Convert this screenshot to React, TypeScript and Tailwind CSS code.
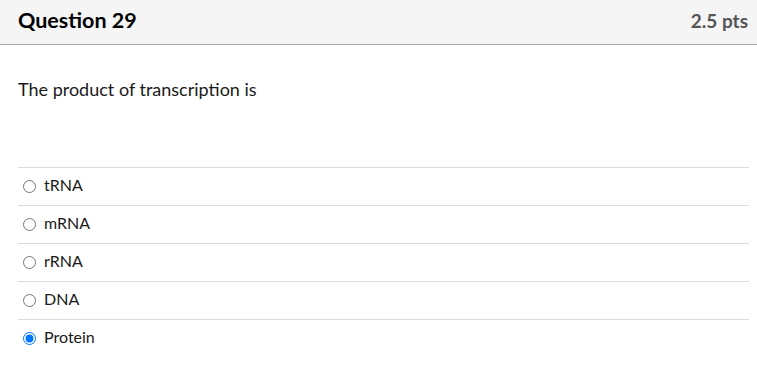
const options = ["tRNA", "mRNA", "rRNA", "DNA", "Protein"];

export default function App() {
    return (
        <div className="w-[757px] h-[369px] bg-white font-['Lato','Liberation_Sans',sans-serif] text-[#1a1a1a]">
            <div className="h-[45px] flex items-center justify-between pl-[18px] pr-[9px] bg-[#f5f5f5] border-b border-[#a8a8a8]">
                <h2 className="text-[21.5px] font-bold text-black leading-none -mt-[3px]">Question 29</h2>
                <span className="text-[19px] font-bold text-[#555] leading-none -mt-[3px]">2.5 pts</span>
            </div>
            <div className="pl-[18px] pr-[8px]">
                <p className="pt-[32px] text-[18px] leading-[24px]">The product of transcription is</p>
                <div className="mt-[66px]">
                    {options.map((opt) => (
                        <label
                            key={opt}
                            className="h-[38px] flex items-center border-t border-[#dcdcdc] text-[16px]"
                        >
                            <input
                                type="radio"
                                name="q29"
                                defaultChecked={opt === "Protein"}
                                className="w-[13px] h-[13px] m-0 ml-[5px] mr-[8px]"
                            />
                            <span className="pb-[3px]">{opt}</span>
                        </label>
                    ))}
                </div>
            </div>
        </div>
    );
}
